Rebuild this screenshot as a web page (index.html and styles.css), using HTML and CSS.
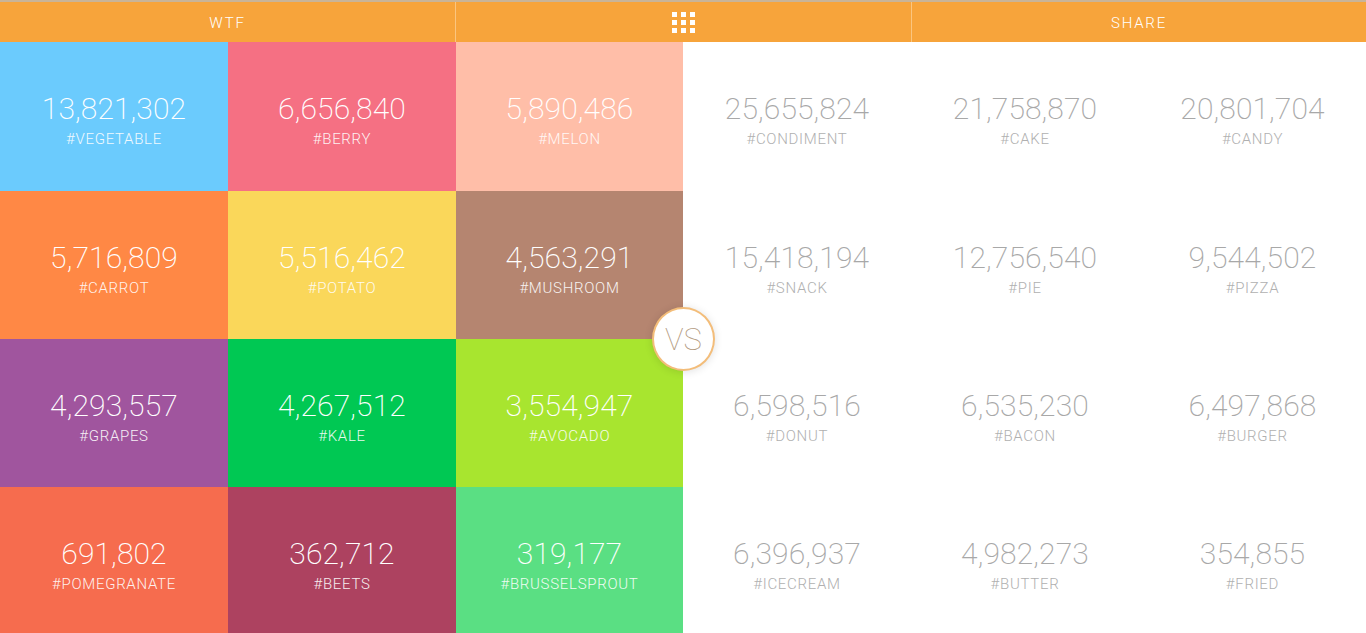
FILE: index.html
```html
<!DOCTYPE html>
<html lang="en">
  <head>
    <meta charset="UTF-8" />
    <meta name="viewport" content="width=device-width, initial-scale=1.0" />
    <title>Vegetables vs Junk</title>
    <link rel="stylesheet" href="styles.css">
  </head>
  <body>
    <header class="topbar">
      <div class="topbar-item">WTF</div>
      <div class="topbar-item">
        <svg class="grid-icon" width="23" height="21" viewBox="0 0 23 21" fill="#fff">
          <rect x="0" y="0" width="5" height="5"/><rect x="9" y="0" width="5" height="5"/><rect x="18" y="0" width="5" height="5"/>
          <rect x="0" y="8" width="5" height="5"/><rect x="9" y="8" width="5" height="5"/><rect x="18" y="8" width="5" height="5"/>
          <rect x="0" y="16" width="5" height="5"/><rect x="9" y="16" width="5" height="5"/><rect x="18" y="16" width="5" height="5"/>
        </svg>
      </div>
      <div class="topbar-item">SHARE</div>
    </header>
    <main class="board">
      <div class="tile vegetable"><span class="count">13,821,302</span><span class="tag">#VEGETABLE</span></div>
      <div class="tile berry"><span class="count">6,656,840</span><span class="tag">#BERRY</span></div>
      <div class="tile melon"><span class="count">5,890,486</span><span class="tag">#MELON</span></div>
      <div class="tile junk"><span class="count">25,655,824</span><span class="tag">#CONDIMENT</span></div>
      <div class="tile junk"><span class="count">21,758,870</span><span class="tag">#CAKE</span></div>
      <div class="tile junk"><span class="count">20,801,704</span><span class="tag">#CANDY</span></div>

      <div class="tile carrot"><span class="count">5,716,809</span><span class="tag">#CARROT</span></div>
      <div class="tile potato"><span class="count">5,516,462</span><span class="tag">#POTATO</span></div>
      <div class="tile mushroom"><span class="count">4,563,291</span><span class="tag">#MUSHROOM</span></div>
      <div class="tile junk"><span class="count">15,418,194</span><span class="tag">#SNACK</span></div>
      <div class="tile junk"><span class="count">12,756,540</span><span class="tag">#PIE</span></div>
      <div class="tile junk"><span class="count">9,544,502</span><span class="tag">#PIZZA</span></div>

      <div class="tile grapes"><span class="count">4,293,557</span><span class="tag">#GRAPES</span></div>
      <div class="tile kale"><span class="count">4,267,512</span><span class="tag">#KALE</span></div>
      <div class="tile avocado"><span class="count">3,554,947</span><span class="tag">#AVOCADO</span></div>
      <div class="tile junk"><span class="count">6,598,516</span><span class="tag">#DONUT</span></div>
      <div class="tile junk"><span class="count">6,535,230</span><span class="tag">#BACON</span></div>
      <div class="tile junk"><span class="count">6,497,868</span><span class="tag">#BURGER</span></div>

      <div class="tile pomegranate"><span class="count">691,802</span><span class="tag">#POMEGRANATE</span></div>
      <div class="tile beets"><span class="count">362,712</span><span class="tag">#BEETS</span></div>
      <div class="tile sprout"><span class="count">319,177</span><span class="tag">#BRUSSELSPROUT</span></div>
      <div class="tile junk"><span class="count">6,396,937</span><span class="tag">#ICECREAM</span></div>
      <div class="tile junk"><span class="count">4,982,273</span><span class="tag">#BUTTER</span></div>
      <div class="tile junk"><span class="count">354,855</span><span class="tag">#FRIED</span></div>

      <div class="versus">VS</div>
    </main>
  </body>
</html>
```
FILE: styles.css
```css
html,
body {
  height: 100%;
}
body {
  margin: 0;
  font-family: Roboto, "Liberation Sans", sans-serif;
  font-weight: 300;
  background-color: #fff;
  color: #fff;
  overflow: hidden;
}
.topbar {
  display: grid;
  grid-template-columns: 456px 456px 454px;
  height: 40px;
  border-top: 2px solid #c9b498;
  background-color: #f7a43b;
}
.topbar-item {
  display: flex;
  justify-content: center;
  align-items: center;
  padding-top: 1px;
  font-size: 15px;
  font-weight: 300;
  letter-spacing: 1.8px;
  border-right: 1px solid #fbc57f;
}
.topbar-item:last-child {
  border-right: 0;
}
.board {
  position: relative;
  display: grid;
  grid-template-columns: 228px 228px 227px 228px 228px 227px;
  grid-template-rows: 149px 148px 148px 146px;
}
.tile {
  display: flex;
  flex-direction: column;
  align-items: center;
  padding-top: 47px;
}
.count {
  font-size: 30px;
  font-weight: 200;
  line-height: 40px;
  letter-spacing: 0.1px;
}
.tag {
  font-size: 15px;
  line-height: 20px;
  letter-spacing: 0.7px;
  opacity: 0.9;
}
.junk {
  color: #a8a8a8;
}
.junk .tag {
  opacity: 1;
  color: #b0b0b0;
}
.vegetable { background-color: #6bcbfd; }
.berry { background-color: #f57083; }
.melon { background-color: #ffbea8; }
.carrot { background-color: #ff8845; }
.potato { background-color: #fad75a; }
.mushroom { background-color: #b58570; }
.grapes { background-color: #a0559e; }
.kale { background-color: #00c853; }
.avocado { background-color: #a8e52f; }
.pomegranate { background-color: #f66c4e; }
.beets { background-color: #ad4260; }
.sprout { background-color: #5adf83; }
.versus {
  position: absolute;
  left: 652px;
  top: 265px;
  width: 59px;
  height: 59px;
  padding-top: 1px;
  box-sizing: content-box;
  display: flex;
  justify-content: center;
  align-items: center;
  border: 2px solid #f3bd7a;
  border-radius: 50%;
  background-color: #fff;
  color: #b39a80;
  font-size: 31px;
  font-weight: 100;
  box-shadow: 0 1px 8px rgba(0, 0, 0, 0.12);
}
```
